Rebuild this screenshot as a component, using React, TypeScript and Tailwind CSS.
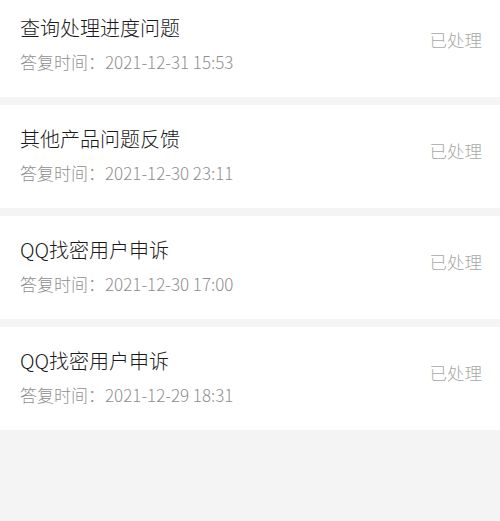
const ITEMS = [
  { title: "查询处理进度问题", time: "2021-12-31 15:53" },
  { title: "其他产品问题反馈", time: "2021-12-30 23:11" },
  { title: "QQ找密用户申诉", time: "2021-12-30 17:00" },
  { title: "QQ找密用户申诉", time: "2021-12-29 18:31" },
];

export default function App() {
  return (
    <div
      className="h-[521px] w-[500px] overflow-hidden bg-[#f4f4f4] font-light"
      style={{ fontFamily: '"Noto Sans CJK SC", "Noto Sans", sans-serif' }}
    >
      {/* list, scrolled a little */}
      <div className="-mt-[6px] flex flex-col gap-[8px]">
        {ITEMS.map((item, i) => (
          <div
            key={i}
            className="flex h-[103px] items-start justify-between bg-white pl-[20px] pr-[18px] pt-[20px]"
          >
            <div className="flex flex-col gap-[8px]">
              <p className="text-[20px] leading-[28px] text-[#1a1a1a]">{item.title}</p>
              <p className="text-[17px] leading-[24px] text-[#8f8f8f]">答复时间：{item.time}</p>
            </div>
            <span className="mt-[14px] text-[17.5px] leading-[24px] text-[#a8a8a8]">已处理</span>
          </div>
        ))}
      </div>
    </div>
  );
}
